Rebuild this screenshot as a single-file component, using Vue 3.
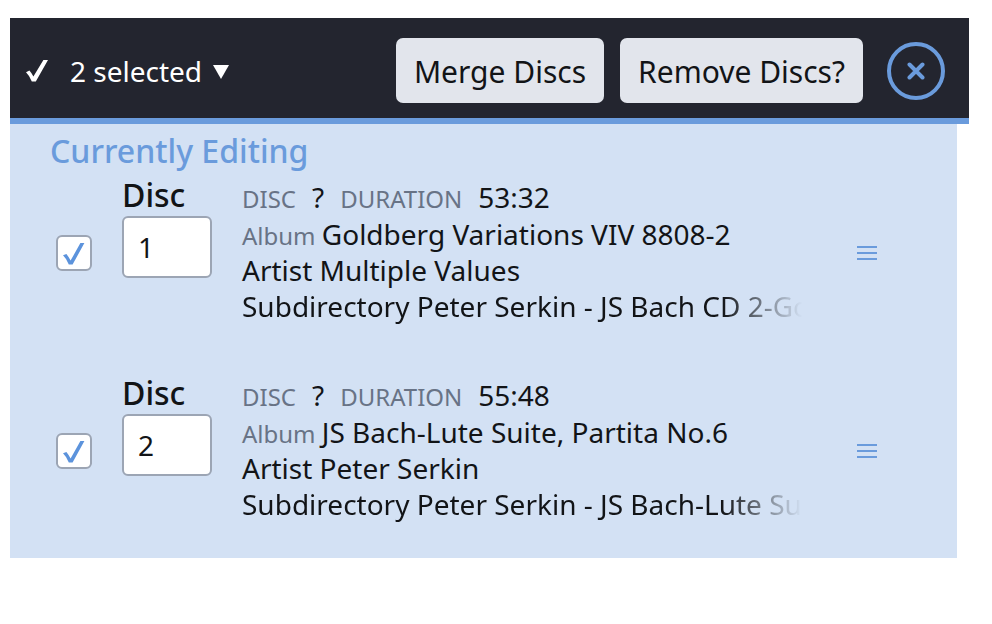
<script setup>
import { ref, computed } from 'vue'

const discs = ref([
  {
    id: 1,
    number: '1',
    checked: true,
    disc: '?',
    duration: '53:32',
    album: 'Goldberg Variations VIV 8808-2',
    artist: 'Multiple Values',
    subdirectory: 'Peter Serkin - JS Bach CD 2-Go'
  },
  {
    id: 2,
    number: '2',
    checked: true,
    disc: '?',
    duration: '55:48',
    album: 'JS Bach-Lute Suite, Partita No.6',
    artist: 'Peter Serkin',
    subdirectory: 'Peter Serkin - JS Bach-Lute Su'
  }
])

const selectedCount = computed(() => discs.value.filter((d) => d.checked).length)

function clearSelection() {
  discs.value.forEach((d) => (d.checked = false))
}
</script>

<template>
  <main class="page">
    <header class="toolbar">
      <button type="button" class="selection">
        <svg class="selection-check" viewBox="0 0 22 24" aria-hidden="true">
          <path d="M0 13.2 L3.4 11.6 Q5.6 14 7.4 17.6 L17.4 1 L22 1 L9.8 22.6 L5.8 22.6 Q3.6 16.6 0 13.2 Z" />
        </svg>
        <span>{{ selectedCount }} selected</span>
        <svg class="selection-arrow" viewBox="0 0 16 16" aria-hidden="true">
          <path d="M0 2 H16 L8 16 Z" />
        </svg>
      </button>
      <div class="actions">
        <button type="button" class="action">Merge Discs</button>
        <button type="button" class="action">Remove Discs?</button>
        <button type="button" class="close" aria-label="Close" @click="clearSelection">
          <svg viewBox="0 0 18 18" aria-hidden="true">
            <path d="M2.5 2.5 L15.5 15.5 M15.5 2.5 L2.5 15.5" />
          </svg>
        </button>
      </div>
    </header>

    <section class="panel">
      <h2 class="title">Currently Editing</h2>
      <ul class="list">
        <li v-for="disc in discs" :key="disc.id" class="row">
          <label class="check">
            <input v-model="disc.checked" type="checkbox" :aria-label="'Select disc ' + disc.number" />
            <svg v-if="disc.checked" viewBox="0 0 22 24" aria-hidden="true">
              <path d="M0 14.2 L3.4 13 Q5.6 15.6 7.6 19.6 L17.4 2 L21.4 2 L9.6 23.6 L5.8 23.6 Q3.6 17.6 0 14.2 Z" />
            </svg>
          </label>
          <div class="field">
            <label :for="'disc-' + disc.id">Disc</label>
            <input :id="'disc-' + disc.id" v-model="disc.number" type="text" inputmode="numeric" />
          </div>
          <div class="details">
            <p class="stats">
              <span class="caption">DISC</span>
              <span>{{ disc.disc }}</span>
              <span class="caption">DURATION</span>
              <span>{{ disc.duration }}</span>
            </p>
            <p><span class="caption">Album&#32;</span>{{ disc.album }}</p>
            <p>Artist {{ disc.artist }}</p>
            <p class="fade">Subdirectory {{ disc.subdirectory }}</p>
          </div>
          <button type="button" class="handle" aria-label="Reorder disc">
            <svg viewBox="0 0 20 16" aria-hidden="true">
              <path d="M0 2 H20 M0 8 H20 M0 14 H20" />
            </svg>
          </button>
        </li>
      </ul>
    </section>
  </main>
</template>

<style>
body {
  background: #fff;
}
</style>

<style scoped>
.page,
.page * {
  box-sizing: border-box;
}

.page {
  padding: 18px 23px 24px 10px;
  font-family: "Noto Sans", sans-serif;
  font-size: 28px;
  line-height: 36px;
  color: #121417;
}

button,
input {
  margin: 0;
  font: inherit;
  color: inherit;
}

button {
  padding: 0;
  border: 0;
  background: none;
  cursor: pointer;
}

.toolbar {
  display: flex;
  align-items: center;
  justify-content: space-between;
  padding: 20px 24px 15px 16px;
  background: #23252f;
  border-bottom: 6px solid #6a9bdc;
}

.selection {
  display: flex;
  align-items: center;
  color: #fff;
  white-space: nowrap;
}

.selection-check {
  width: 22px;
  height: 24px;
  margin-right: 22px;
  fill: currentColor;
}

.selection-arrow {
  width: 16px;
  height: 16px;
  margin-left: 11px;
  fill: currentColor;
}

.actions {
  display: flex;
  align-items: center;
  gap: 16px;
}

.action {
  padding: 16px 18px 13px;
  border-radius: 7px;
  background: #e2e5ec;
  font-size: 30px;
  white-space: nowrap;
}

.close {
  display: flex;
  align-items: center;
  justify-content: center;
  width: 58px;
  height: 58px;
  margin-left: 8px;
  border: 4px solid #6a9bdc;
  border-radius: 50%;
}

.close svg {
  width: 18px;
  height: 18px;
  fill: none;
  stroke: #6a9bdc;
  stroke-width: 4;
  stroke-linecap: round;
}

.panel {
  margin-right: 12px;
  padding: 7px 80px 0 40px;
  background: #d3e1f4;
}

.title {
  margin: 0;
  font-size: 32px;
  line-height: 40px;
  font-weight: 500;
  color: #6a9bdc;
}

.list {
  display: grid;
  gap: 44px;
  margin: 0;
  padding: 5px 0 30px 6px;
  list-style: none;
}

.row {
  display: grid;
  grid-template-columns: 36px 90px minmax(0, 1fr) 20px;
  column-gap: 30px;
  align-items: center;
}

.check {
  display: grid;
  place-items: center;
  width: 36px;
  height: 36px;
}

.check input {
  grid-area: 1 / 1;
  width: 36px;
  height: 36px;
  appearance: none;
  border: 2px solid #9ca5b4;
  border-radius: 6px;
  background: #fff;
}

.check svg {
  grid-area: 1 / 1;
  width: 22px;
  height: 24px;
  fill: #5c93dc;
  pointer-events: none;
}

.field {
  align-self: start;
}

.field label {
  display: block;
  margin-bottom: 2px;
  font-size: 32px;
  line-height: 38px;
  font-weight: 500;
}

.field input {
  display: block;
  width: 100%;
  height: 62px;
  padding: 0 14px;
  border: 2px solid #9ca5b4;
  border-radius: 6px;
  background: #fff;
}

.details {
  margin-right: 21px;
  padding: 3px 0 6px;
}

.details p {
  margin: 0;
  white-space: nowrap;
}

.details .stats {
  display: flex;
  align-items: baseline;
  gap: 16px;
  margin-bottom: 1px;
}

.caption {
  font-size: 24px;
  line-height: 24px;
  white-space: pre;
  color: #687386;
}

.fade {
  mask-image: linear-gradient(to right, #000 calc(100% - 84px), transparent calc(100% - 4px));
}

.handle {
  display: flex;
}

.handle svg {
  width: 20px;
  height: 16px;
  fill: none;
  stroke: #6a9bdc;
  stroke-width: 2;
}
</style>
